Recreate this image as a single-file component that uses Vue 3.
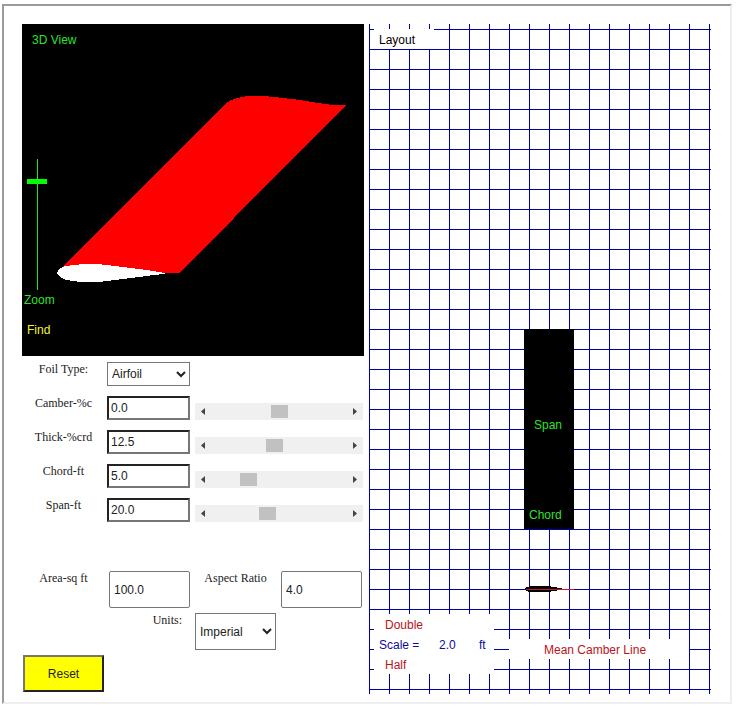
<script setup>
import { ref, reactive } from 'vue'

const foilType = ref('Airfoil')
const units = ref('Imperial')
const zoom = ref(84)
const area = ref('100.0')
const aspect = ref('4.0')

const defaults = [
  { id: 'camber', label: 'Camber-%c', value: '0.0', pos: 504 },
  { id: 'thick', label: 'Thick-%crd', value: '12.5', pos: 462 },
  { id: 'chord', label: 'Chord-ft', value: '5.0', pos: 239 },
  { id: 'span', label: 'Span-ft', value: '20.0', pos: 402 },
]
const params = reactive(defaults.map((p) => ({ ...p })))

function step(p, delta) {
  p.pos = Math.min(1000, Math.max(0, Number(p.pos) + delta))
}

function reset() {
  defaults.forEach((d, i) => Object.assign(params[i], d))
  foilType.value = 'Airfoil'
  units.value = 'Imperial'
  zoom.value = 84
}
</script>

<template>
  <main class="frame">
    <div class="left">
      <section class="view">
        <svg class="drawing" role="img" aria-label="Wing in three dimensions">
          <path
            class="wing"
            d="M36 247 L203 80 L209 76 L215 74 L226 72 L240 72 L253 73 L278 76 L296 79 L310 81 L324 81 L158 248.5 L140 249 Z"
          />
          <path
            class="section"
            d="M35 249 L37 245 L43 242 L53 241 L60 240 L75 240 L93 242 L117 245 L131 247 L143 249 L143 250 L131 251 L117 253 L93 256 L77 258 L58 258 L44 256 L38 253 Z"
          />
          <text class="green" x="10" y="20">3D View</text>
        </svg>
        <input
          id="zoom"
          v-model="zoom"
          class="zoom-range"
          type="range"
          min="0"
          max="100"
        />
        <label class="zoom-label" for="zoom">Zoom</label>
        <button type="button" class="text-button find">Find</button>
      </section>

      <form class="controls" @submit.prevent>
        <div class="row">
          <label class="name" for="foil">Foil Type:</label>
          <select id="foil" v-model="foilType" class="field">
            <option>Airfoil</option>
            <option>Flat Plate</option>
            <option>Ellipse</option>
          </select>
        </div>
        <div v-for="p in params" :key="p.id" class="row">
          <label class="name" :for="p.id">{{ p.label }}</label>
          <input :id="p.id" v-model="p.value" class="field inset" type="text" />
          <div class="scroll">
            <button type="button" class="arrow" :aria-label="`Decrease ${p.label}`" @click="step(p, -10)">
              <svg width="5" height="7"><path d="M4 0 L0 3.5 L4 7 Z" /></svg>
            </button>
            <input v-model="p.pos" class="bar" type="range" min="0" max="1000" :aria-label="p.label" />
            <button type="button" class="arrow" :aria-label="`Increase ${p.label}`" @click="step(p, 10)">
              <svg width="5" height="7"><path d="M1 0 L5 3.5 L1 7 Z" /></svg>
            </button>
          </div>
        </div>

        <div class="row tall results">
          <label class="name" for="area">Area-sq ft</label>
          <input id="area" v-model="area" class="box" type="text" />
          <label class="name" for="aspect">Aspect Ratio</label>
          <input id="aspect" v-model="aspect" class="box" type="text" />
        </div>
        <div class="row tall">
          <label class="name units" for="units">Units:</label>
          <select id="units" v-model="units" class="box square">
            <option>Imperial</option>
            <option>Metric</option>
          </select>
        </div>
        <div class="row tall">
          <button type="button" class="reset" @click="reset">Reset</button>
        </div>
      </form>
    </div>

    <section class="layout">
      <svg class="drawing" role="img" aria-label="Wing planform on a grid">
        <defs>
          <pattern id="grid" width="20" height="20" y="5" patternUnits="userSpaceOnUse">
            <path d="M0 0 H20 V1 H1 V20 H0 Z" fill="#0000a8" />
          </pattern>
        </defs>
        <rect width="100%" height="100%" fill="url(#grid)" />
        <g class="blank">
          <rect x="5" y="5" width="60" height="20" />
          <rect x="5" y="590" width="120" height="60" />
          <rect x="140" y="615" width="180" height="20" />
        </g>
        <rect x="155" y="305" width="50" height="200" />
        <path d="M156 564 L161 562 L178 562 L186 563 L195 565 L186 567 L178 568 L161 568 L157 567 Z" />
        <rect x="157" y="565" width="48" height="1" fill="#d01420" />
        <text x="10" y="20">Layout</text>
        <text class="green" x="165" y="405">Span</text>
        <text class="green" x="160" y="495">Chord</text>
        <g class="blue">
          <text x="10" y="625">Scale =</text>
          <text x="70" y="625">2.0</text>
          <text x="110" y="625">ft</text>
        </g>
        <text class="dark-red" x="175" y="630">Mean Camber Line</text>
      </svg>
      <button type="button" class="text-button scale double">Double</button>
      <button type="button" class="text-button scale half">Half</button>
    </section>
  </main>
</template>

<style>
body {
  margin: 0;
  background: #fff;
}
</style>

<style scoped>
.frame {
  display: grid;
  grid-template-columns: 1fr 1fr;
  gap: 5px;
  margin: 4px 5px 6px 2px;
  padding: 18px 19px 8px 18px;
  border: 2px solid;
  border-color: #9a9a9a #eee #eee #9a9a9a;
  font: 12px/14px "Liberation Sans", Arial, sans-serif;
  color: #000;
}
.left {
  display: flex;
  flex-direction: column;
  min-width: 0;
}
.view,
.layout {
  position: relative;
  min-width: 0;
}
.view {
  height: 332px;
  background: #000;
}
.layout {
  height: 670px;
}
.drawing {
  display: block;
  width: 100%;
  height: 100%;
  shape-rendering: crispEdges;
}
.wing { fill: #f00; }
.section { fill: #fff; }
.blank { fill: #fff; }
.green { fill: #30e030; }
.blue { fill: #0c0c9c; }
.dark-red { fill: #b8141c; }

.text-button {
  position: absolute;
  padding: 0;
  border: 0;
  background: none;
  font: inherit;
}
.zoom-range {
  position: absolute;
  left: 5px;
  top: 135px;
  width: 20px;
  height: 131px;
  margin: 0;
  appearance: none;
  writing-mode: vertical-lr;
  direction: rtl;
  background: linear-gradient(#20e820, #20e820) 10px 0 / 1px 100% no-repeat;
}
.zoom-range::-webkit-slider-thumb {
  appearance: none;
  width: 20px;
  height: 5px;
  background: #0f0;
}
.zoom-label {
  position: absolute;
  left: 2px;
  top: 269px;
  color: #30e030;
}
.find {
  left: 5px;
  top: 299px;
  color: #f4f430;
}
.scale {
  left: 16px;
  color: #b8141c;
}
.double { top: 594px; }
.half { top: 634px; }

.controls {
  display: flex;
  flex-direction: column;
  gap: 10px;
  padding: 6px 2px 0 1px;
}
.row {
  display: grid;
  grid-template-columns: repeat(4, 1fr);
  column-gap: 5px;
  height: 24px;
}
.row.tall {
  height: 37px;
  margin-top: -5px;
}
.row.results {
  margin-top: 39px;
}
.name {
  font: 12px/14px "Liberation Serif", "Times New Roman", serif;
  text-align: center;
  color: #222;
}
.units {
  grid-column: 2;
  padding-right: 8px;
  text-align: right;
}
.field,
.box {
  box-sizing: border-box;
  min-width: 0;
  height: 100%;
  margin: 0;
  padding: 0 2px;
  border: 1px solid #767676;
  border-radius: 0;
  background: #fff;
  font: inherit;
  color: #222;
}
.field {
  margin-left: -2px;
}
.inset {
  border-width: 2px;
  border-color: #222 #767676 #767676 #222;
}
.box {
  padding: 0 4px;
  border-radius: 2px;
}
select.field,
.square {
  padding: 0;
  border-radius: 0;
}
.scroll {
  display: flex;
  grid-column: 3 / 5;
  align-self: end;
  height: 17px;
  margin-right: -1px;
  background: #f0f0f0;
}
.arrow {
  display: flex;
  flex: none;
  align-items: center;
  justify-content: center;
  width: 17px;
  padding: 0;
  border: 0;
  background: none;
}
.arrow path {
  fill: #444;
}
.bar {
  flex: 1;
  min-width: 0;
  height: 17px;
  margin: 0;
  appearance: none;
  background: none;
}
.bar::-webkit-slider-thumb {
  appearance: none;
  width: 17px;
  height: 13px;
  background: #c1c1c1;
}
.reset {
  padding: 0;
  border: 2px solid;
  border-color: #767676 #222 #222 #767676;
  background: #ff0;
  font: inherit;
  color: #222;
}
</style>
